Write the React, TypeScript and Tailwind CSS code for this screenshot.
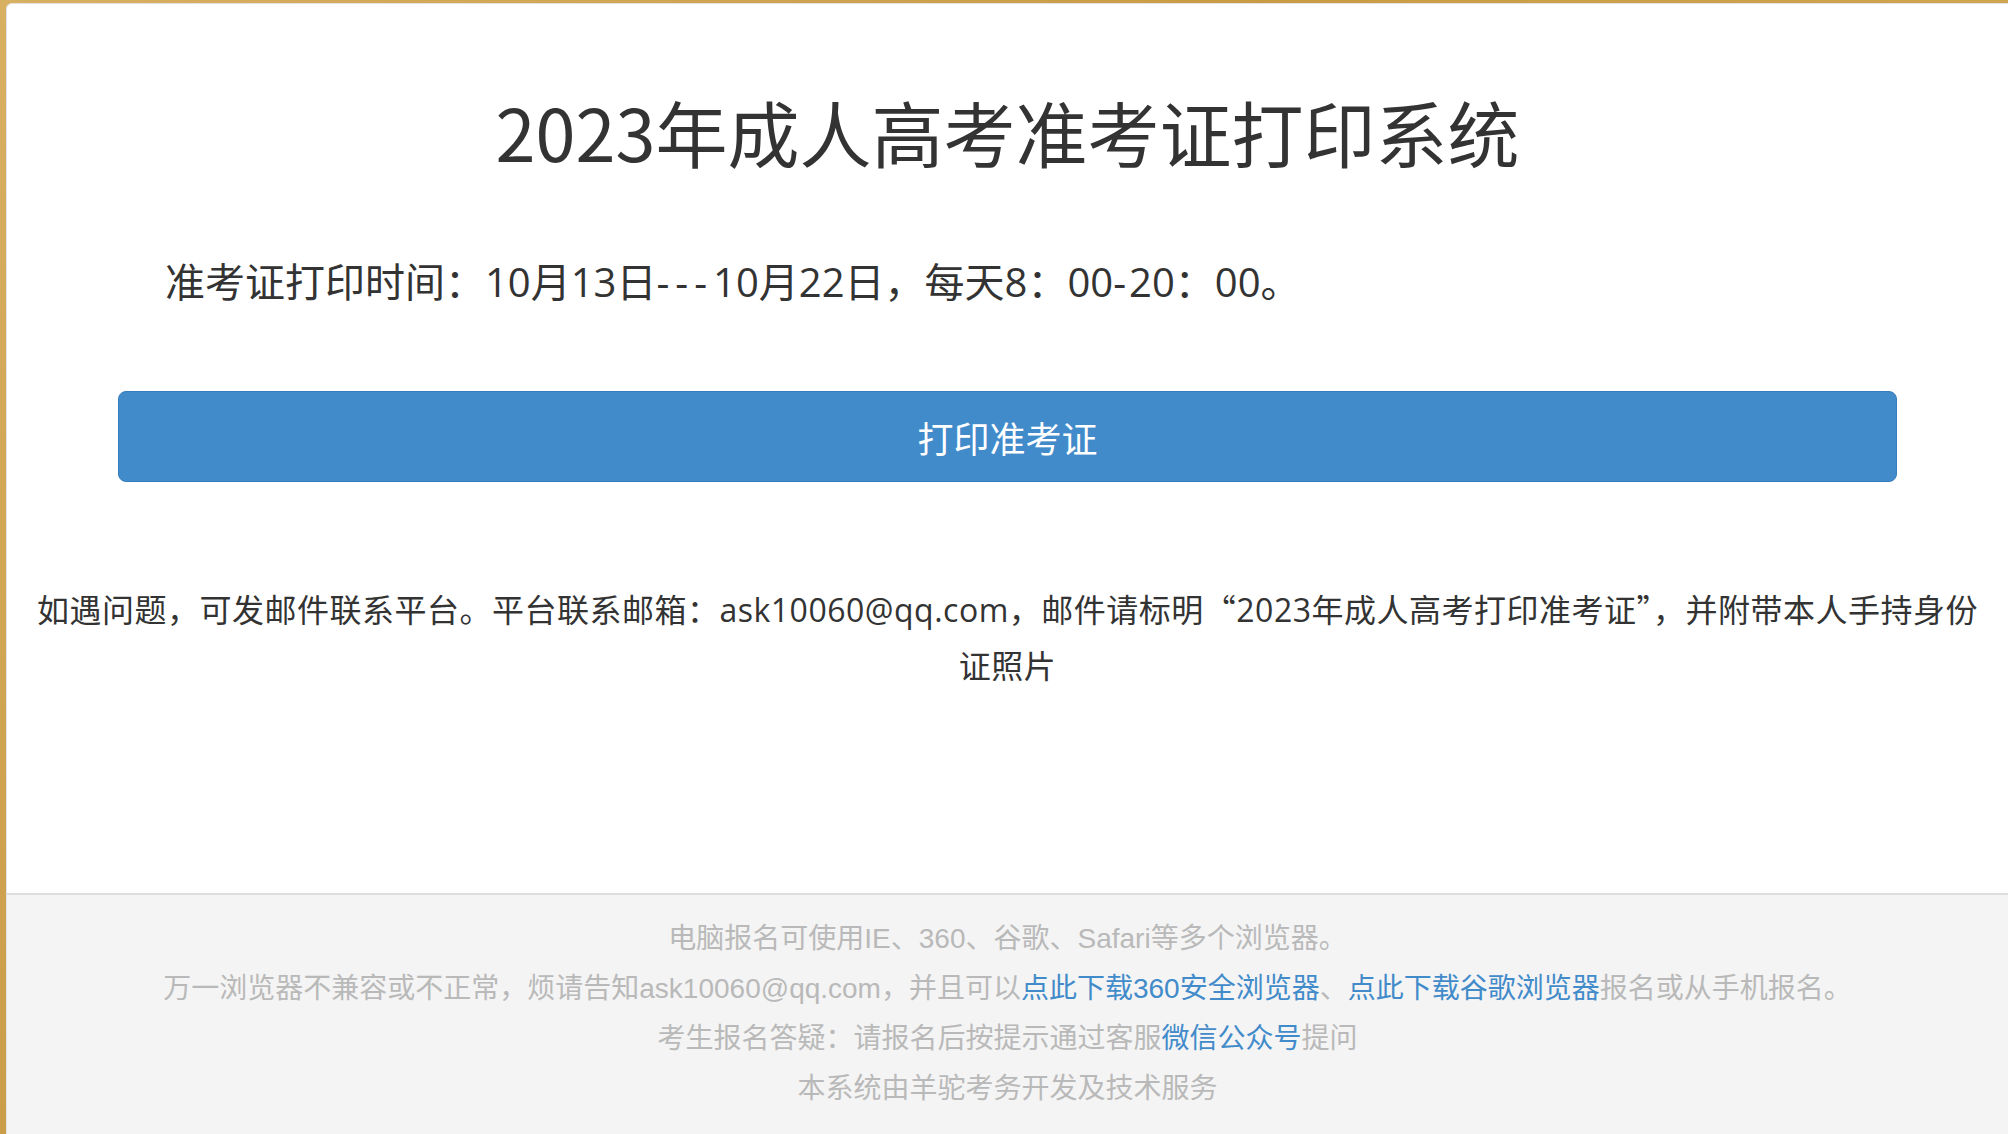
export default function App() {
  const cjk = '"Noto Sans CJK SC", "Noto Sans", sans-serif';
  const mixed = '"Open Sans", "Noto Sans CJK SC", sans-serif';
  const footFont = '"Liberation Sans", "Noto Sans CJK SC", sans-serif';

  return (
    <div className="min-h-screen bg-[linear-gradient(135deg,#d8b062,#c99b45_40%,#d2a853_70%,#c59843)] pt-[3px] pl-[6px]">
      <div
        className="bg-white rounded-tl-[6px] rounded-bl-[6px] border-l border-t border-[#e3e3e3] overflow-hidden text-[#333]"
        style={{ fontFamily: cjk }}
      >
        <div className="px-[111px]">
          <h1 className="pt-[87px] text-center text-[72px] leading-[80px] font-normal">
            2023年成人高考准考证打印系统
          </h1>
          <p className="mt-[83px] pl-[47px] text-[40px] leading-[56px]" style={{ fontFamily: mixed }}>
            准考证打印时间：10月13日<span className="tracking-[6px]">---</span>10月22日，每天8：00
            <span className="tracking-[3px]">-</span>20：00。
          </p>
          <button className="mt-[81px] w-full h-[91px] rounded-[8px] bg-[#428bca] border border-[#357ebd] text-white text-[36px] leading-none">
            打印准考证
          </button>
        </div>

        <p
          className="mt-[100px] px-[20px] text-center text-[32px] leading-[56px] tracking-[0.5px]"
          style={{ fontFamily: mixed }}
        >
          如遇问题，可发邮件联系平台。平台联系邮箱：ask10060@qq.com，邮件请标明
          <span className="leading-none" style={{ fontFamily: cjk }}>“</span>2023年成人高考打印准考证
          <span className="leading-none" style={{ fontFamily: cjk }}>”</span>，并附带本人手持身份
          <br />
          证照片
        </p>

        <footer
          className="mt-[199px] bg-[#f4f4f4] border-t-2 border-[#dddddd] pt-[19px] pb-[40px] text-center text-[28px] leading-[50px] text-[#b9b9b9]"
          style={{ fontFamily: footFont }}
        >
          <p>电脑报名可使用IE、360、谷歌、Safari等多个浏览器。</p>
          <p>
            万一浏览器不兼容或不正常，烦请告知ask10060@qq.com，并且可以
            <a className="text-[#428bca]">点此下载360安全浏览器</a>、
            <a className="text-[#428bca]">点此下载谷歌浏览器</a>
            报名或从手机报名。
          </p>
          <p>
            考生报名答疑：请报名后按提示通过客服<a className="text-[#428bca]">微信公众号</a>提问
          </p>
          <p>本系统由羊驼考务开发及技术服务</p>
        </footer>
      </div>
    </div>
  );
}
